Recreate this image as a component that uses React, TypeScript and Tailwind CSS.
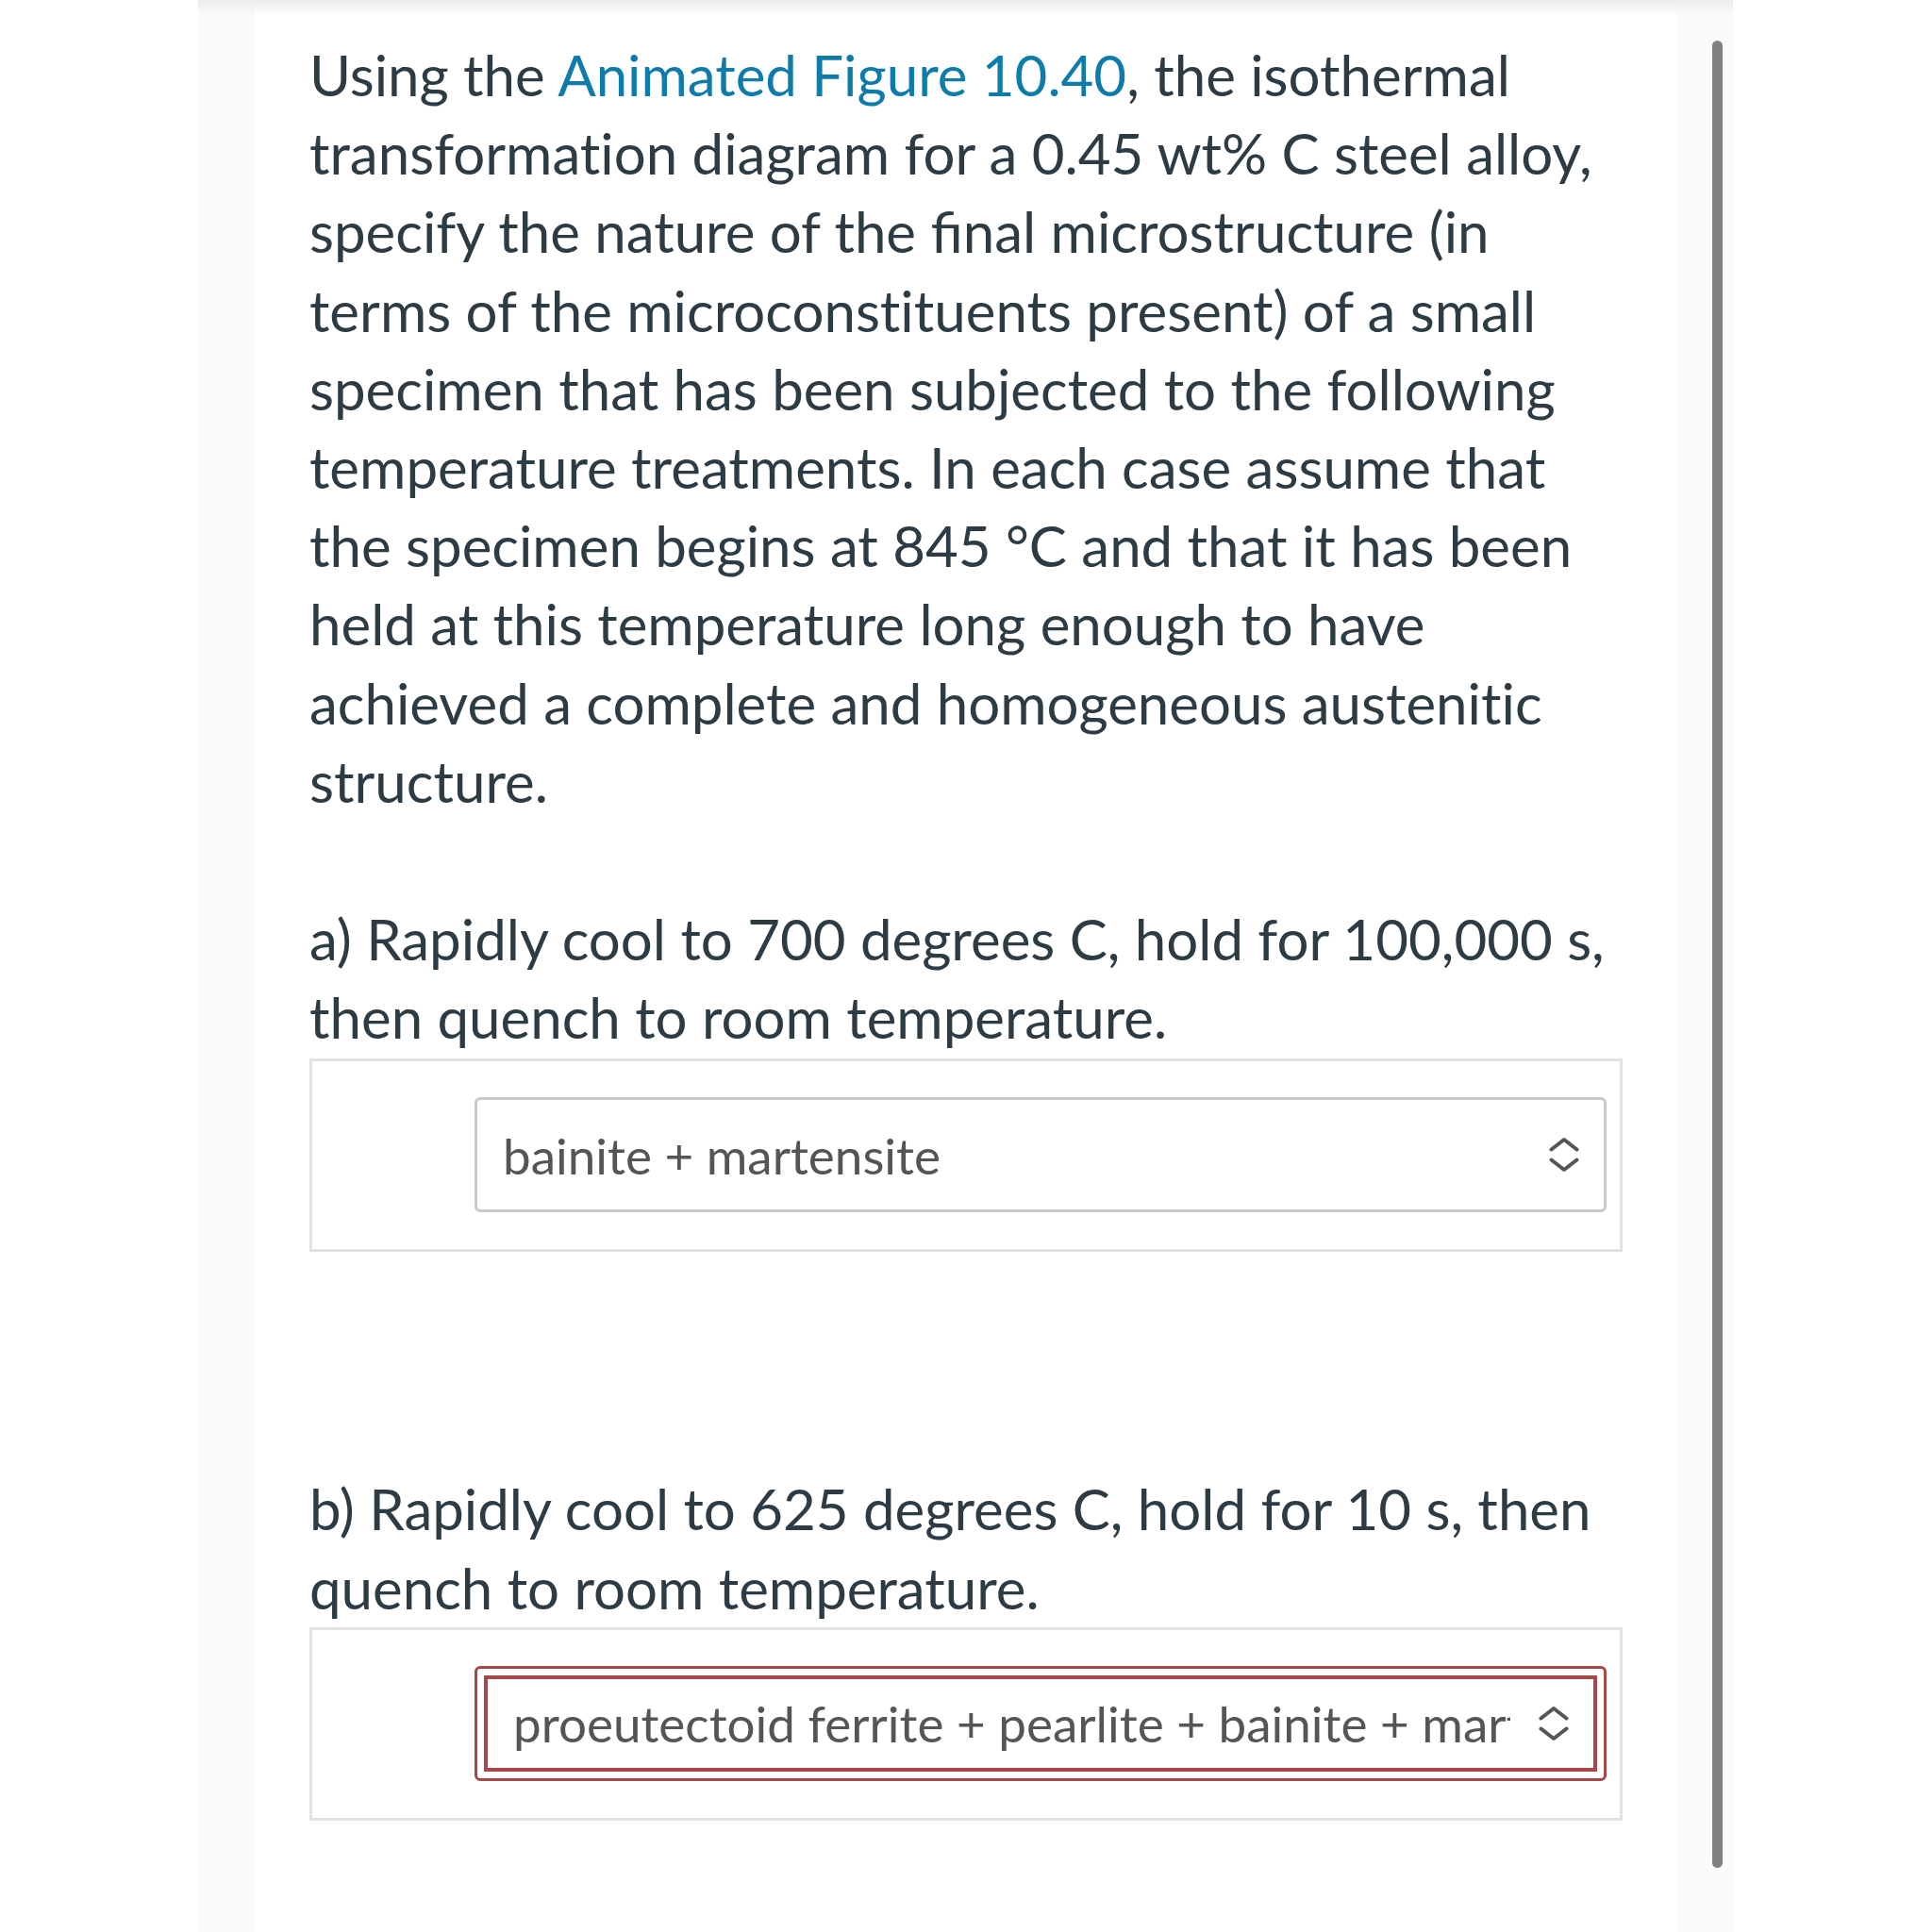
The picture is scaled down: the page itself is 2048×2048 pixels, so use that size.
import React from "react";

const font = { fontFamily: "Lato, 'Noto Sans', sans-serif" };

// zero-width non-joiner, keeps Lato from joining "t" + "i"
const Z = "\u200C";

function Chevrons() {
  return (
    <svg width="32" height="38" viewBox="0 0 32 38" className="shrink-0">
      <path d="M2.5 13.5 L16 3 L29.5 13.5" fill="none" stroke="#555" strokeWidth="4" strokeLinecap="round" strokeLinejoin="round" />
      <path d="M2.5 24.5 L16 35 L29.5 24.5" fill="none" stroke="#555" strokeWidth="4" strokeLinecap="round" strokeLinejoin="round" />
    </svg>
  );
}

function SelectText({ text }: { text: string }) {
  return (
    <>
      <span className="flex-1 overflow-hidden whitespace-nowrap text-[53px] text-[#555]">{text}</span>
      <span className="ml-[30px] mr-[26px] flex items-center">
        <Chevrons />
      </span>
    </>
  );
}

function AnswerBox({ children }: { children: React.ReactNode }) {
  return (
    <div className="w-[1392px] border-[3px] border-[#e1e1e1] pt-[38px] pb-[39px] pl-[172px] pr-[14px]">
      {children}
    </div>
  );
}

const intro = [
  null,
  `transformat${Z}ion diagram for a 0.45 wt% C steel alloy,`,
  "specify the nature of the final microstructure (in",
  `terms of the microconst${Z}ituents present) of a small`,
  "specimen that has been subjected to the following",
  "temperature treatments. In each case assume that",
  "the specimen begins at 845 °C and that it has been",
  "held at this temperature long enough to have",
  `achieved a complete and homogeneous austenit${Z}ic`,
  "structure.",
];

export default function App() {
  return (
    <div className="relative flex h-[2048px] w-full overflow-hidden bg-white text-[#2d3b45]" style={font}>
      {/* top shadow over the panel */}
      <div className="pointer-events-none absolute left-[210px] top-0 h-[16px] w-[1627px] bg-gradient-to-b from-[#ececec] to-transparent" />

      <div className="w-[210px] shrink-0" />
      <div className="w-[60px] shrink-0 bg-[#fafafa]" />

      {/* ================= CONTENT ================= */}
      <div className="w-[1507px] shrink-0 pl-[58px] pt-[38px]">
        <div className="text-[60px] leading-[83.2px]">
          {intro.map((line, i) =>
            line === null ? (
              <div key={i} className="whitespace-nowrap">
                Using the <span className="text-[#0f7bab]">Animated Figure 10.40</span>, the isothermal
              </div>
            ) : (
              <div key={i} className="whitespace-nowrap">
                {line}
              </div>
            )
          )}
        </div>

        <div className="mt-[84px] text-[60px] leading-[83.2px]">
          <div className="whitespace-nowrap">a) Rapidly cool to 700 degrees C, hold for 100,000 s,</div>
          <div className="whitespace-nowrap">then quench to room temperature.</div>
        </div>
        <div className="mt-[2px]">
          <AnswerBox>
            <div className="flex h-[122px] items-center rounded-[6px] border-[3px] border-[#c9c9c9] pl-[27px]">
              <SelectText text="bainite + martensite" />
            </div>
          </AnswerBox>
        </div>

        <div className="mt-[231px] text-[60px] leading-[83.2px]">
          <div className="whitespace-nowrap">b) Rapidly cool to 625 degrees C, hold for 10 s, then</div>
          <div className="whitespace-nowrap">quench to room temperature.</div>
        </div>
        <div>
          <AnswerBox>
            <div className="h-[122px] rounded-[6px] border-[3px] border-[#a8474a] p-[7px]">
              <div className="flex h-full items-center border-4 border-[#a8474a] pl-[27px]">
                <SelectText text="proeutectoid ferrite + pearlite + bainite + martensite" />
              </div>
            </div>
          </AnswerBox>
        </div>
      </div>

      {/* ================= SCROLLBAR STRIP ================= */}
      <div className="w-[60px] shrink-0 bg-[#fafafa] pl-[38px] pt-[43px]">
        <div className="h-[1937px] w-[11px] rounded-full bg-[#808080]" />
      </div>
      <div className="flex-1" />
    </div>
  );
}
